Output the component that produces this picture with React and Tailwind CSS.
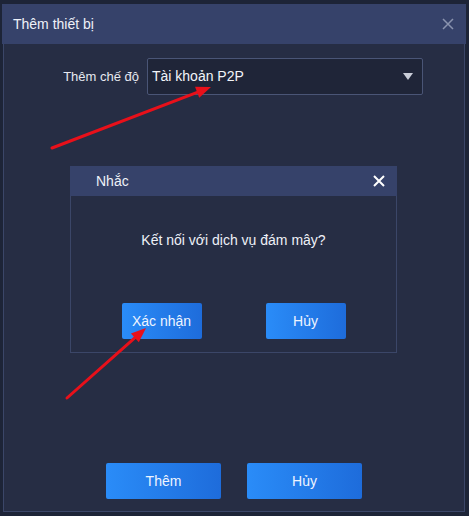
const font = { fontFamily: '"Liberation Sans", Arial, sans-serif' };

const BlueButton = ({ children, className = '' }) => (
  <button
    className={`h-[36px] rounded-[2px] bg-gradient-to-r from-[#2a8cf8] to-[#1e6cdb] text-[14px] text-[#eef4ff] ${className}`}
  >
    {children}
  </button>
);

const Arrow = ({ x1, y1, x2, y2 }) => {
  const angle = Math.atan2(y2 - y1, x2 - x1);
  const len = 16;
  const spread = 0.38;
  const ax = x2 - len * Math.cos(angle - spread);
  const ay = y2 - len * Math.sin(angle - spread);
  const bx = x2 - len * Math.cos(angle + spread);
  const by = y2 - len * Math.sin(angle + spread);
  const sx = x2 - (len - 4) * Math.cos(angle);
  const sy = y2 - (len - 4) * Math.sin(angle);
  return (
    <g>
      <line x1={x1} y1={y1} x2={sx} y2={sy} stroke="#e8101a" strokeWidth="3" strokeLinecap="round" />
      <polygon points={`${x2},${y2} ${ax},${ay} ${bx},${by}`} fill="#e8101a" />
    </g>
  );
};

export default function App() {
  return (
    <div className="relative h-[516px] w-[469px] overflow-hidden bg-[#1d2437]" style={font}>
      <div className="ml-[2px] pt-[4px] w-[464px]">
        {/* header */}
        <div className="flex h-[40px] items-center justify-between bg-[#36426a] pl-[11px] pr-[12px]">
          <span className="text-[14px] text-[#eef1f8]">Thêm thiết bị</span>
          <svg width="12" height="12" viewBox="0 0 12 12">
            <path d="M1 1L11 11M11 1L1 11" stroke="#8a93ae" strokeWidth="1.5" />
          </svg>
        </div>

        {/* body */}
        <div className="mx-[1px] h-[468px] border-x border-b border-[#3b4668] bg-[#262d44] pt-[14px]">
          <div className="flex items-center">
            <div className="w-[135px] text-right text-[13px] text-[#e6e9f0]">Thêm chế độ</div>
            <div className="ml-[8px] flex h-[37px] w-[276px] items-center justify-between rounded-[2px] border border-[#4a5576] bg-[#1f2538] pl-[4px] pr-[9px]">
              <span className="text-[14px] text-[#f2f4f8]">Tài khoản P2P</span>
              <svg width="10" height="7" viewBox="0 0 10 7">
                <path d="M0 0H10L5 7Z" fill="#c9cdd8" />
              </svg>
            </div>
          </div>

          {/* confirm dialog */}
          <div className="ml-[66px] mt-[71px] w-[327px]">
            <div className="flex h-[30px] items-center justify-between bg-[#36426a] pl-[26px] pr-[12px]">
              <span className="text-[14px] text-[#eef1f8]">Nhắc</span>
              <svg width="12" height="12" viewBox="0 0 12 12">
                <path d="M1 1L11 11M11 1L1 11" stroke="#ffffff" strokeWidth="2" />
              </svg>
            </div>
            <div className="flex h-[157px] flex-col items-center border-x border-b border-[#3b4668] bg-[#262d44]">
              <div className="mt-[34px] text-[14px] text-[#eef1f8]">Kết nối với dịch vụ đám mây?</div>
              <div className="mt-[52px] flex gap-[64px]">
                <BlueButton className="w-[80px]">Xác nhận</BlueButton>
                <BlueButton className="w-[80px]">Hủy</BlueButton>
              </div>
            </div>
          </div>

          <div className="mt-[110px] flex justify-center gap-[26px]">
            <BlueButton className="w-[115px]">Thêm</BlueButton>
            <BlueButton className="w-[115px]">Hủy</BlueButton>
          </div>
        </div>
      </div>

      <svg className="pointer-events-none absolute left-0 top-0" width="469" height="516">
        <Arrow x1={52} y1={148} x2={211} y2={87} />
        <Arrow x1={67} y1={398} x2={146} y2={328} />
      </svg>
    </div>
  );
}
